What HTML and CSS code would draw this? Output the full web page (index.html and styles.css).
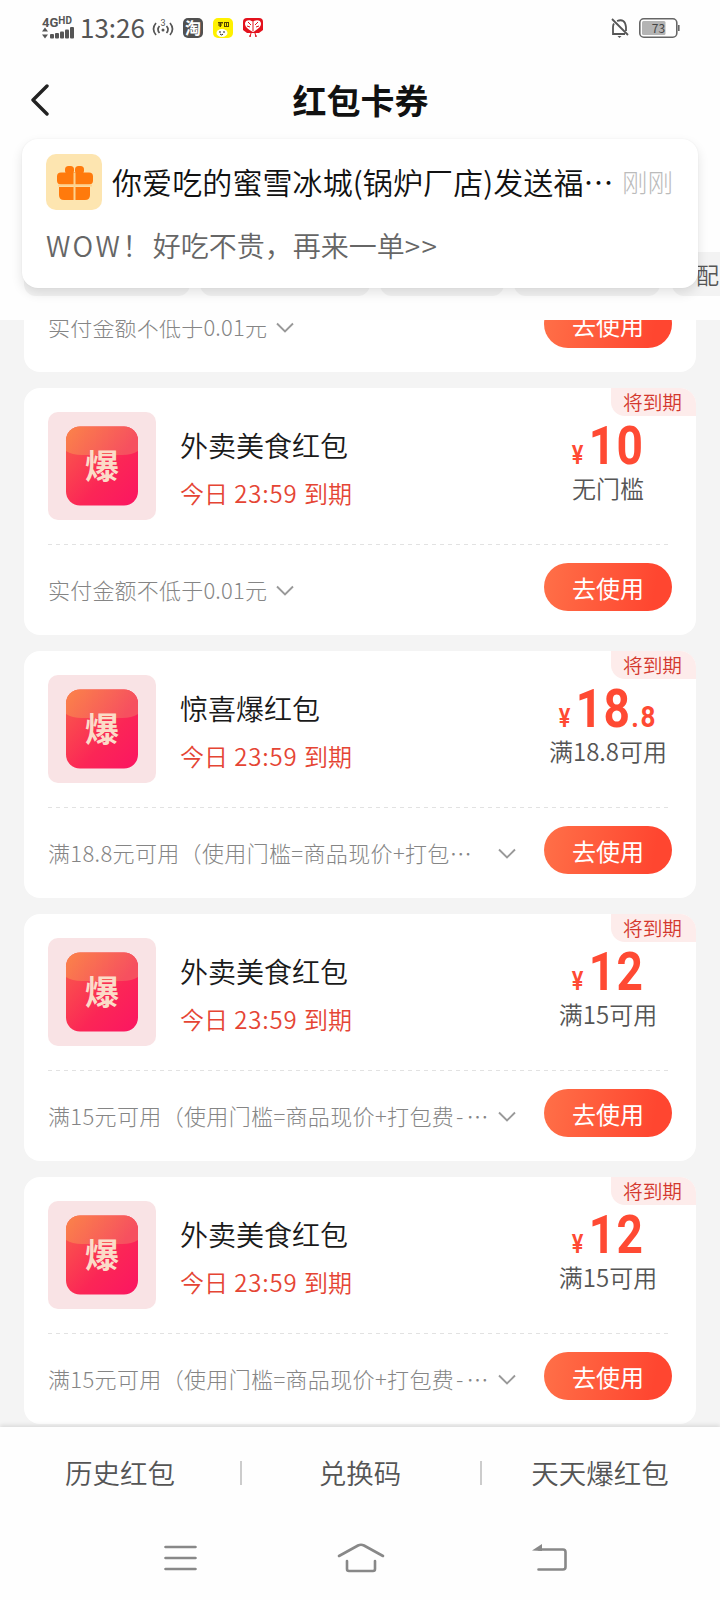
FILE: index.html
```
<!DOCTYPE html>
<html lang="zh-CN">
<head>
<meta charset="utf-8">
<title>红包卡券</title>
<link rel="stylesheet" href="styles.css">
</head>
<body>
<svg width="0" height="0" class="defs">
  <defs>
    <linearGradient id="pk" x1="0" y1="0" x2="1" y2="1"><stop offset="0" stop-color="#f9604a"/><stop offset=".6" stop-color="#fb2656"/><stop offset="1" stop-color="#fb1562"/></linearGradient>
    <linearGradient id="flap" x1="0" y1="0" x2="1" y2=".3"><stop offset="0" stop-color="#fb8449"/><stop offset="1" stop-color="#f6505f"/></linearGradient>
    <clipPath id="pkclip"><rect x="18" y="14.500" width="72" height="79" rx="14"/></clipPath>
    <symbol id="packet" viewBox="0 0 108 108">
      <rect x="18" y="14.500" width="72" height="79" rx="14" fill="url(#pk)"/>
      <path d="M18 14h72v25q-6 4-16 4H34q-10 0-16-4z" fill="url(#flap)" clip-path="url(#pkclip)"/>
      <text x="54" y="67" class="packet-char" text-anchor="middle">爆</text>
    </symbol>
    <symbol id="chev" viewBox="0 0 18 12"><path d="M1 1.500l8 8 8-8" fill="none" stroke="#999" stroke-width="1.900"/></symbol>
  </defs>
</svg>
<div class="phone">
  <header class="head">
    <div class="status">
      <div class="net">
        <div class="net-t">4G<span>HD</span></div>
        <svg width="32" height="12" viewBox="0 0 32 12" fill="#555"><path d="M0 4.500l3-4 3 4zM0 7.500l3 4 3-4z"/><rect x="8" y="7" width="4" height="4.500" rx="1"/><rect x="13" y="6" width="4" height="5.500" rx="1"/><rect x="18" y="4.500" width="4" height="7" rx="1"/><rect x="23" y="2.500" width="4" height="9" rx="1"/><rect x="28" y="0" width="4" height="11.500" rx="1"/></svg>
      </div>
      <div class="time">13:26</div>
      <svg class="hot" width="22" height="20" viewBox="0 0 22 20" fill="none" stroke="#555" stroke-width="1.700"><path d="M4 5q-5 6 0 12M7.500 8q-3 3.500 0 7M18 5q5 6 0 12M14.500 8q3 3.500 0 7"/><circle cx="11" cy="12" r="1.500" fill="#555" stroke="none"/><text x="11" y="7.500" text-anchor="middle" class="hot-n">3</text></svg>
      <div class="app tao">淘</div>
      <svg class="app" width="20" height="20" viewBox="0 0 20 20"><rect width="20" height="20" rx="5" fill="#fff100"/><path d="M5 4h5v1.500H5zM6.500 4h1.500v5H6.500zM5 6.500h4v1H5zM11 4h5v5h-5z" fill="#554400"/><path d="M12.500 5v3M14.500 5v3" stroke="#fff100"/><ellipse cx="9" cy="15" rx="5.500" ry="4" fill="#fff"/><path d="M7 16q2 2 3 0" stroke="#222" fill="none"/><circle cx="7" cy="14" r=".8"/><circle cx="11" cy="14" r=".8"/></svg>
      <svg class="app" width="20" height="20" viewBox="0 0 20 20"><path d="M4 0h12q4 0 4 4v8l-4 3H4l-4-3V4q0-4 4-4z" fill="#e3121d"/><path d="M10 14C5 11 2 9 2 5.500S7 1 10 4c3-3 8-2 8 1.500S15 11 10 14z" fill="#fff"/><path d="M10 4v9M5 4l3 3M15 4l-3 3M4 8l3 1M16 8l-3 1M8 15l-1 4M12 15l1 4M6 18h2M12 18h2" stroke="#e3121d" stroke-width="1"/></svg>
      <div class="grow"></div>
      <svg class="bell" width="18" height="20" viewBox="0 0 18 20" fill="none" stroke="#555" stroke-width="1.800"><path d="M3 5.500Q2 7 2 9v7h12M6 3q8-3 9 6v4M1 1l16 16"/><path d="M6.500 18h4l-2 2z" fill="#555" stroke="none"/></svg>
      <svg width="41" height="20" viewBox="0 0 41 20"><rect x=".8" y=".8" width="37" height="18.400" rx="4" fill="none" stroke="#666" stroke-width="1.600"/><rect x="3" y="3" width="23.500" height="14" rx="1.500" fill="#b4b4b4"/><rect x="39" y="7" width="1.600" height="6" fill="#666"/><text x="19.500" y="14.500" text-anchor="middle" class="bat">73</text></svg>
    </div>
    <div class="titlebar">
      <svg class="back" width="20" height="34" viewBox="0 0 20 34"><path d="M18 3L4 17l14 14" fill="none" stroke="#222" stroke-width="3.400" stroke-linecap="round" stroke-linejoin="round"/></svg>
      <h1>红包卡券</h1>
    </div>
    <div class="chips"><i class="c1"></i><i class="c2"></i><i class="c3"></i><i class="c4"></i><i class="c5">配</i></div>
    <div class="notice">
      <div class="n-top">
        <svg width="56" height="56" viewBox="0 0 56 56"><rect width="56" height="56" rx="10" fill="#fde5b0"/><g fill="#ff7a0c"><rect x="11" y="18.500" width="36" height="12" rx="4"/><path d="M13 33h31v8q0 5-5 5H18q-5 0-5-5z"/><rect x="19" y="12" width="9" height="8" rx="3.500"/><rect x="29" y="12" width="9" height="8" rx="3.500"/></g><path d="M28.500 19v27M12 31.500h34" stroke="#fdd28e" stroke-width="2"/></svg>
        <div class="n-title">你爱吃的蜜雪冰城(锅炉厂店)发送福<span>⋯</span></div>
        <div class="n-time">刚刚</div>
      </div>
      <div class="n-sub"><span>WOW！</span>好吃不贵，再来一单<em>&gt;&gt;</em></div>
    </div>
  </header>
  <main class="list">
    <section class="card first">
      <div class="foot"><div class="cond">实付金额不低于0.01元</div><svg class="chev" width="18" height="12"><use href="#chev"/></svg><a class="btn">去使用</a></div>
    </section>
    <section class="card">
      <div class="tag">将到期</div>
      <div class="body"><svg class="pic" width="108" height="108"><use href="#packet"/></svg><div class="info"><h2>外卖美食红包</h2><p>今日 <span>23:59</span> 到期</p></div><div class="price"><div class="amt"><small class="yen">¥</small><b>10</b></div><p>无门槛</p></div></div>
      <div class="foot"><div class="cond">实付金额不低于0.01元</div><svg class="chev" width="18" height="12"><use href="#chev"/></svg><a class="btn">去使用</a></div>
    </section>
    <section class="card">
      <div class="tag">将到期</div>
      <div class="body"><svg class="pic" width="108" height="108"><use href="#packet"/></svg><div class="info"><h2>惊喜爆红包</h2><p>今日 <span>23:59</span> 到期</p></div><div class="price"><div class="amt"><small class="yen">¥</small><b>18<small>.8</small></b></div><p>满18.8可用</p></div></div>
      <div class="foot"><div class="cond long">满18.8元可用（使用门槛=商品现价+打包⋯</div><svg class="chev" width="18" height="12"><use href="#chev"/></svg><a class="btn">去使用</a></div>
    </section>
    <section class="card">
      <div class="tag">将到期</div>
      <div class="body"><svg class="pic" width="108" height="108"><use href="#packet"/></svg><div class="info"><h2>外卖美食红包</h2><p>今日 <span>23:59</span> 到期</p></div><div class="price"><div class="amt"><small class="yen">¥</small><b>12</b></div><p>满15可用</p></div></div>
      <div class="foot"><div class="cond long">满15元可用（使用门槛=商品现价+打包费<span>-</span>⋯</div><svg class="chev" width="18" height="12"><use href="#chev"/></svg><a class="btn">去使用</a></div>
    </section>
    <section class="card">
      <div class="tag">将到期</div>
      <div class="body"><svg class="pic" width="108" height="108"><use href="#packet"/></svg><div class="info"><h2>外卖美食红包</h2><p>今日 <span>23:59</span> 到期</p></div><div class="price"><div class="amt"><small class="yen">¥</small><b>12</b></div><p>满15可用</p></div></div>
      <div class="foot"><div class="cond long">满15元可用（使用门槛=商品现价+打包费<span>-</span>⋯</div><svg class="chev" width="18" height="12"><use href="#chev"/></svg><a class="btn">去使用</a></div>
    </section>
  </main>
  <footer>
    <nav class="links"><a>历史红包</a><a>兑换码</a><a>天天爆红包</a></nav>
    <div class="sys">
      <svg width="34" height="30" viewBox="0 0 34 30"><path d="M1.500 4h30M1.500 15h30M1.500 26h30" stroke="#888" stroke-width="2.600" stroke-linecap="round"/></svg>
      <svg width="48" height="32" viewBox="0 0 48 32" fill="none" stroke="#888" stroke-width="2.600" stroke-linecap="round" stroke-linejoin="round"><path d="M2 14L21 3.500q3-1.500 6 0L46 14M10 19v8q0 2 2 2h24q2 0 2-2v-8"/></svg>
      <svg width="36" height="30" viewBox="0 0 36 30"><path d="M7 6.500h24q2.500 0 2.500 2.500v15q0 2.500-2.500 2.500H6.500" fill="none" stroke="#888" stroke-width="2.600" stroke-linecap="round"/><path d="M0 7.500L10 1v7z" fill="#888"/></svg>
    </div>
  </footer>
</div>
</body>
</html>
```
FILE: styles.css
```
* { box-sizing: border-box; margin: 0; padding: 0; }
body { background: #fff; font-family: "Noto Sans CJK SC", sans-serif; font-weight: 350; color: #222; }
svg { display: block; flex: none; }
.defs { position: absolute; }
.phone { width: 720px; height: 1600px; display: flex; flex-direction: column; overflow: hidden; background: #f4f4f4; }

.head { height: 320px; flex: none; background: #fefefe; position: relative; }
.status { display: flex; height: 56px; padding: 0 40px 0 42px; align-items: center; }
.net { width: 32px; }
.net-t { font: bold 13px/11px Roboto, sans-serif; color: #555; display: flex; align-items: flex-start; height: 10px; }
.net-t span { font-size: 10px; line-height: 8px; }
.time { margin-left: 6px; width: 66px; font: 26px/54px "Noto Sans CJK SC", sans-serif; height: 56px; color: #555; white-space: nowrap; }
.hot { margin: 0 9px 0 6px; }
.hot-n { font: 9px Roboto, sans-serif; fill: #555; stroke: none; }
.app { width: 20px; height: 20px; margin-right: 10px; }
.tao { background: #505050; color: #fff; border-radius: 5px; font-size: 16px; font-weight: 700; line-height: 19px; text-align: center; }
.grow { flex: 1; }
.bell { margin-right: 10px; }
.bat { font: 12px "Noto Sans CJK SC", sans-serif; fill: #444; }
.titlebar { height: 88px; display: flex; align-items: center; padding-left: 29px; }
.back { flex: none; }
h1 { flex: 1; text-align: center; margin-right: 48px; font-size: 34px; line-height: 50px; font-weight: 700; color: #111; }
.chips { display: flex; gap: 10px; padding: 0 0 0 24px; margin-top: 108px; height: 44px; width: 720px; overflow: hidden; }
.chips i { flex: none; font-style: normal; background: #f3f3f3; border-radius: 12px; height: 44px; }
.c1 { width: 166px; } .c2 { width: 170px; } .c3 { width: 124px; } .c4 { width: 146px; }
.c5 { width: 120px; margin-left: 2px; padding-left: 24px; font-size: 23px; line-height: 44px; color: #555; }
.notice { position: absolute; left: 22px; top: 139px; width: 676px; height: 149px; border-radius: 16px; background: #fff; padding: 15px 24px; box-shadow: 0 5px 12px rgba(0,0,0,.11), 0 0 2px rgba(0,0,0,.05); }
.n-top { display: flex; align-items: center; }
.n-title { margin-left: 10px; font-size: 30px; line-height: 54px; padding-bottom: 2px; white-space: nowrap; width: 510px; color: #111; letter-spacing: .1px; }
.n-time { font-size: 25.500px; line-height: 54px; padding-bottom: 2px; font-weight: 300; color: #bbb; white-space: nowrap; }
.n-sub { margin-top: 15px; font-size: 28px; line-height: 40px; color: #666; white-space: nowrap; }
.n-sub span { letter-spacing: 2.400px; }
.n-sub em { font-style: normal; letter-spacing: 1.500px; }

.list { flex: none; height: 1107px; overflow: hidden; padding: 0 24px; display: flex; flex-direction: column; gap: 16px; }
.card { position: relative; height: 247px; flex: none; background: #fff; border-radius: 16px; padding: 24px 24px 0; }
.first { height: 52px; border-radius: 0 0 16px 16px; padding-top: 0; overflow: hidden; }
.first .foot { margin-top: -38px; }
.tag { position: absolute; right: 0; top: 0; width: 85px; height: 28px; background: #fdeceb; border-radius: 0 16px 0 14px; font-size: 19.700px; line-height: 28px; color: #d4382e; padding-left: 12px; white-space: nowrap; }
.body { display: flex; height: 133px; background: repeating-linear-gradient(90deg, #e2e2e2 0 4px, transparent 4px 8px) 0 100% / 620px 1px no-repeat; }
.pic { background: #f9e3e5; border-radius: 10px; }
.packet-char { font: 600 34px "Noto Sans CJK SC", sans-serif; fill: #fbdcc8; }
.info { flex: 1; padding: 13px 0 0 24px; white-space: nowrap; }
h2 { font-size: 28px; line-height: 40px; font-weight: 350; color: #1a1a1a; }
.info p { font-size: 24px; line-height: 34px; margin-top: 11px; color: #e54534; }
.info span { letter-spacing: .8px; margin: 0 1px; }
.price { width: 128px; text-align: center; color: #ff4a33; }
.amt { height: 58px; display: flex; justify-content: center; align-items: baseline; line-height: 68px; font-family: Roboto, sans-serif; transform: scaleX(.87); }
.amt b { font-size: 53px; font-weight: 700; letter-spacing: 1.500px; }
.amt b small { font-size: 30px; letter-spacing: 2px; }
.yen { font-size: 25px; font-weight: 600; margin-right: 6px; }
.price p { font-size: 24px; line-height: 36px; color: #555; white-space: nowrap; }
.foot { display: flex; padding-top: 18px; height: 66px; }
.cond { font-size: 22px; line-height: 32px; padding-top: 10px; font-weight: 300; color: #858585; white-space: nowrap; letter-spacing: .2px; }
.long { width: 449px; margin-right: 1px; letter-spacing: .35px; }
.long span { letter-spacing: 3px; margin-left: 2px; }
.foot .chev { margin: 22px 0 0 9px; }
.long + .chev { margin-left: 0; }
.btn { margin-left: auto; width: 128px; height: 48px; border-radius: 24px; background: linear-gradient(100deg, #ff7048, #ff4630 85%); color: #fff; font-size: 24px; font-weight: 400; line-height: 50px; text-align: center; }

footer { position: relative; height: 173px; flex: none; background: #fefefe; box-shadow: 0 -2px 4px rgba(0,0,0,.1); }
.links { display: grid; grid-template-columns: repeat(3, 240px); height: 92px; text-align: center; font-size: 27.500px; color: #555; line-height: 90px; }
.links a + a { background: linear-gradient(#ccc, #ccc) 0 50% / 2px 24px no-repeat; }
.sys { display: flex; justify-content: space-between; padding: 23px 152px 0 164px; align-items: center; }
.sys svg:nth-child(2) { margin-right: 9px; }
```
